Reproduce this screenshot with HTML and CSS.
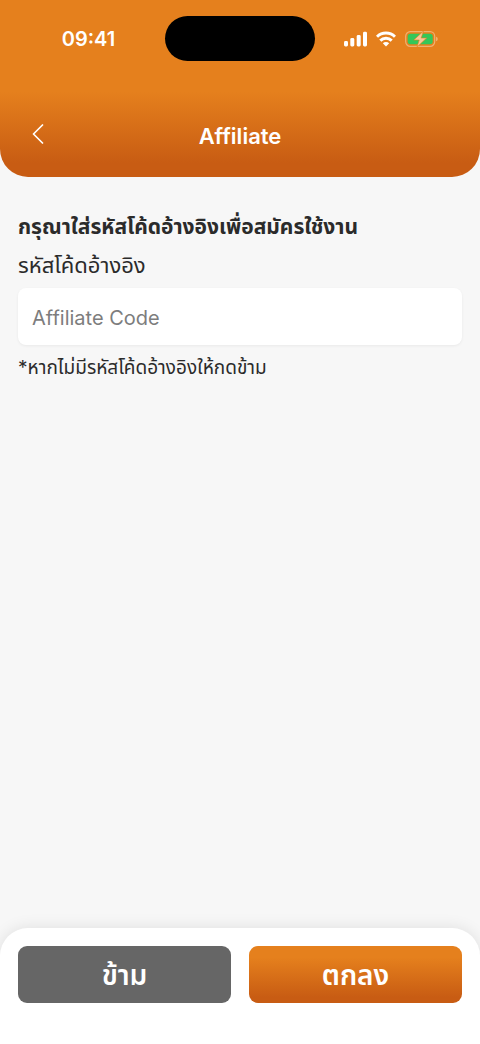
FILE: index.html
```html
<!DOCTYPE html>
<html lang="th">
<head>
<meta charset="utf-8">
<meta name="viewport" content="width=device-width, initial-scale=1">
<title>Affiliate</title>
<link rel="stylesheet" href="styles.css">
</head>
<body>
<div class="screen">
  <header class="header">
    <div class="status">
      <span class="status-time">09:41</span>
      <span class="island"></span>
      <span class="status-icons">
        <svg width="23" height="16" viewBox="0 0 23 16" fill="#fff" aria-hidden="true">
          <rect x="0" y="10" width="4" height="5.500" rx="1.400"/>
          <rect x="6.300" y="7" width="4" height="8.500" rx="1.400"/>
          <rect x="12.700" y="4" width="4" height="11.500" rx="1.400"/>
          <rect x="19" y="0.800" width="4" height="14.700" rx="1.400"/>
        </svg>
        <svg width="20" height="16" viewBox="0 0 20 16" aria-hidden="true">
          <g fill="none" stroke="#fff" stroke-width="3">
            <path d="M1 5.800a12.800 12.800 0 0 1 18 0"/>
            <path d="M4.300 9.600a8.100 8.100 0 0 1 11.400 0"/>
          </g>
          <path d="M10 15.500l-3.200-3.200a4.600 4.600 0 0 1 6.400 0z" fill="#fff"/>
        </svg>
        <svg width="33" height="16" viewBox="0 0 33 16" aria-hidden="true">
          <rect x="0.700" y="0.700" width="29" height="14.600" rx="4.600" fill="none" stroke="#f0b070" stroke-width="1.200"/>
          <path d="M31 5.700q1.800.6 1.800 2.300t-1.800 2.300z" fill="#f0b070"/>
          <rect x="2.700" y="2.700" width="25" height="10.600" rx="2.800" fill="#34c759"/>
          <path d="M18.500 0L8.800 9h5.400L12 16l9.700-9h-5.500z" fill="#f7c898" stroke="#e5801d" stroke-width="0.600"/>
        </svg>
      </span>
    </div>
    <div class="navbar">
      <button class="back" type="button" aria-label="ย้อนกลับ">
        <svg width="12" height="20" viewBox="0 0 12 20" fill="none" stroke="#fff" stroke-width="1.700" stroke-linecap="round" stroke-linejoin="round" aria-hidden="true"><path d="M10.500 1L1.500 10l9 9"/></svg>
      </button>
      <h1 class="title">Affiliate</h1>
    </div>
  </header>
  <main class="content">
    <h2 class="heading">กรุณาใส่รหัสโค้ดอ้างอิงเพื่อสมัครใช้งาน</h2>
    <label class="label" for="code">รหัสโค้ดอ้างอิง</label>
    <input class="field" id="code" type="text" placeholder="Affiliate Code">
    <p class="note">*หากไม่มีรหัสโค้ดอ้างอิงให้กดข้าม</p>
  </main>
  <footer class="actions">
    <button class="btn btn-skip" type="button">ข้าม</button>
    <button class="btn btn-ok" type="button">ตกลง</button>
  </footer>
</div>
</body>
</html>
```
FILE: styles.css
```css
* { box-sizing: border-box; }
body {
  margin: 0;
  background: #f7f7f7;
  color: #2b2b2b;
  font-family: Inter, "Noto Sans Thai", "Noto Sans", sans-serif;
}
.screen {
  min-height: 100vh;
  display: flex;
  flex-direction: column;
}
.header {
  padding: 16px 18px 20px;
  border-radius: 0 0 28px 28px;
  background: linear-gradient(#e5801d 52%, #c85c13 92%);
  color: #fff;
}
.status {
  display: grid;
  grid-template-columns: 1fr 150px 1fr;
  align-items: center;
}
.status-time {
  justify-self: center;
  padding-right: 6px;
  font-size: 20px;
  line-height: 24px;
  font-weight: 600;
}
.island {
  height: 45px;
  border-radius: 23px;
  background: #000;
}
.status-icons {
  display: flex;
  justify-content: flex-end;
  gap: 9px;
  padding-right: 24px;
}
.status-icons svg, .back svg { display: block; }
.navbar {
  display: grid;
  grid-template-columns: 40px 1fr 40px;
  align-items: center;
  margin-top: 52px;
}
.back {
  display: flex;
  justify-content: center;
  align-items: center;
  height: 44px;
  padding: 0 0 2px;
  border: 0;
  background: none;
}
.title {
  margin: 0;
  padding-top: 2px;
  text-align: center;
  font-size: 22px;
  line-height: 28px;
  font-weight: 600;
}
.content {
  flex: 1;
  display: flex;
  flex-direction: column;
  padding: 34px 18px;
}
.heading {
  margin: 0 0 6px;
  font-size: 21px;
  line-height: 32px;
  font-weight: 700;
}
.label {
  margin-bottom: 7px;
  font-size: 22px;
  line-height: 32px;
}
.field {
  width: 100%;
  height: 57px;
  padding: 2px 14px 0;
  border: 0;
  border-radius: 8px;
  background: #fff;
  box-shadow: 0 1px 3px rgba(0, 0, 0, 0.06);
  color: inherit;
  font: inherit;
  font-size: 20px;
}
.field::placeholder { color: #7d7d7d; }
.note {
  margin: 7px 0 0;
  font-size: 19px;
  line-height: 32px;
}
.actions {
  display: grid;
  grid-template-columns: 1fr 1fr;
  gap: 18px;
  padding: 18px 18px 41px;
  border-radius: 28px 28px 0 0;
  background: #fff;
  box-shadow: 0 0 16px rgba(0, 0, 0, 0.1);
}
.btn {
  height: 57px;
  padding: 3px 0 0;
  border: 0;
  border-radius: 9px;
  color: #fff;
  font: inherit;
  font-size: 28px;
  font-weight: 600;
}
.btn-skip { background: #666; }
.btn-ok { background: linear-gradient(#e5801d 20%, #c85c13 90%); }
```
